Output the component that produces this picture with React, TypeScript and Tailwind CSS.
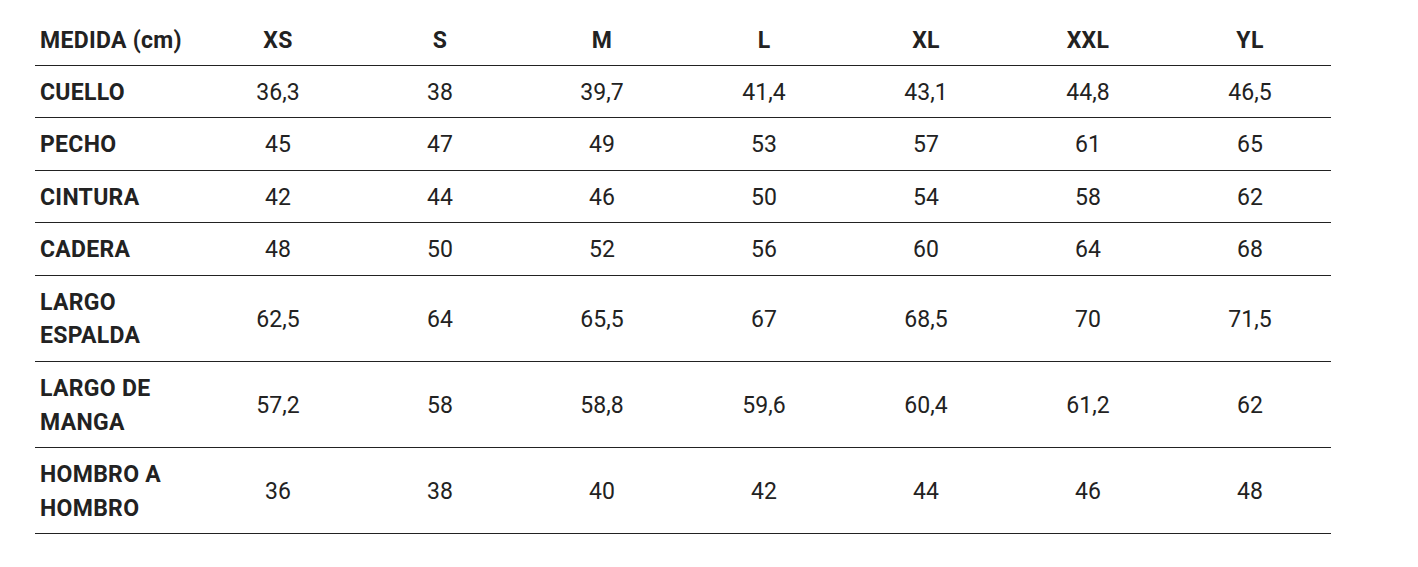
import React from "react"

const sizes = ["XS", "S", "M", "L", "XL", "XXL", "YL"]

const rows: { label: string[]; values: string[] }[] = [
    { label: ["CUELLO"], values: ["36,3", "38", "39,7", "41,4", "43,1", "44,8", "46,5"] },
    { label: ["PECHO"], values: ["45", "47", "49", "53", "57", "61", "65"] },
    { label: ["CINTURA"], values: ["42", "44", "46", "50", "54", "58", "62"] },
    { label: ["CADERA"], values: ["48", "50", "52", "56", "60", "64", "68"] },
    { label: ["LARGO", "ESPALDA"], values: ["62,5", "64", "65,5", "67", "68,5", "70", "71,5"] },
    { label: ["LARGO DE", "MANGA"], values: ["57,2", "58", "58,8", "59,6", "60,4", "61,2", "62"] },
    { label: ["HOMBRO A", "HOMBRO"], values: ["36", "38", "40", "42", "44", "46", "48"] },
]

export default function App() {
    return (
        <div
            className="bg-white min-h-screen pt-[13px] pl-[35px] text-[#222] text-[23px]"
            style={{ fontFamily: "Roboto, 'Liberation Sans', sans-serif" }}
        >
            <table className="w-[1296px] table-fixed border-collapse leading-[33.6px]">
                <thead>
                    <tr className="border-b border-[#222]">
                        <th className="h-[52px] pt-[4px] pl-[5px] text-left font-bold tracking-[0.3px]">MEDIDA (cm)</th>
                        {sizes.map((s) => (
                            <th key={s} className="pt-[4px] text-center font-bold tracking-[0.3px]">
                                {s}
                            </th>
                        ))}
                    </tr>
                </thead>
                <tbody>
                    {rows.map((r) => (
                        <tr key={r.label.join(" ")} className="border-b border-[#222]">
                            <td className="pt-[10px] pb-[8px] pl-[5px] text-left font-bold tracking-[0.3px]">
                                {r.label.map((l, i) => (
                                    <div key={i}>{l}</div>
                                ))}
                            </td>
                            {r.values.map((v, i) => (
                                <td key={i} className="pt-[10px] pb-[8px] text-center font-normal">
                                    {v}
                                </td>
                            ))}
                        </tr>
                    ))}
                </tbody>
            </table>
        </div>
    )
}
